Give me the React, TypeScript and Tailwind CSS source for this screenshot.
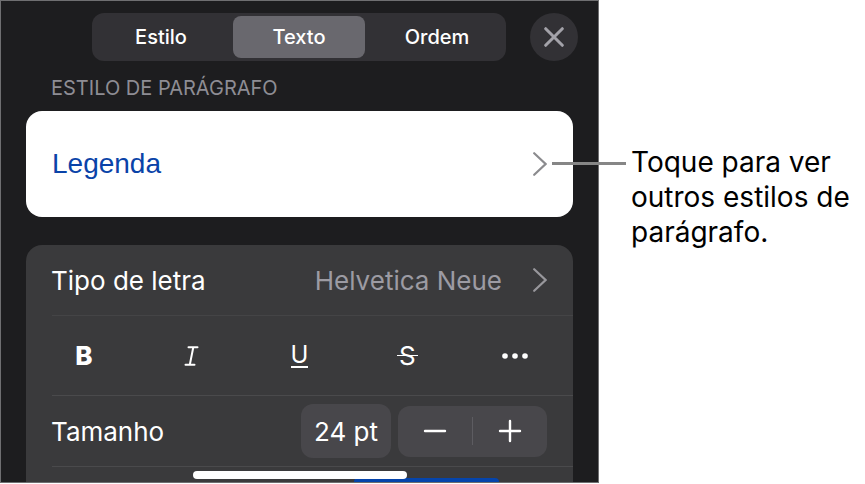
import { clsx } from 'clsx';
import type { ReactNode } from 'react';

const tabs = ['Estilo', 'Texto', 'Ordem'];

const Chevron = ({ className }: { className?: string }) => (
  <svg viewBox="0 0 14 24" className={clsx('h-6 w-3.5', className)} fill="none" stroke="currentColor" strokeWidth="2.2" strokeLinecap="round" aria-hidden="true">
    <path d="M1.2 1.2 12.6 12 1.2 22.8" />
  </svg>
);

interface FormatButtonProps {
  label: string;
  children: ReactNode;
}

const FormatButton = ({ label, children }: FormatButtonProps) => (
  <button type="button" aria-label={label} className="flex h-full flex-1 items-center justify-center">
    {children}
  </button>
);

const Header = () => (
  <header className="flex items-center gap-6 pt-3 pr-5 pl-[91px]">
    <div role="tablist" className="grid h-12 flex-1 grid-cols-3 rounded-xl bg-[#323135] py-[3px]">
      {tabs.map((tab) => (
        <button
          key={tab}
          type="button"
          role="tab"
          aria-selected={tab === 'Texto'}
          className={clsx('mx-[3px] rounded-lg text-xl font-medium', tab === 'Texto' && 'bg-[#69686e]')}
        >
          {tab}
        </button>
      ))}
    </div>
    <button type="button" aria-label="Fechar" className="flex size-12 items-center justify-center rounded-full bg-[#323135] text-[#a3a2a9]">
      <svg viewBox="0 0 20 20" className="size-5" fill="none" stroke="currentColor" strokeWidth="3" strokeLinecap="round" aria-hidden="true">
        <path d="M1.7 1.7 18.3 18.3M18.3 1.7 1.7 18.3" />
      </svg>
    </button>
  </header>
);

const FormatRow = () => (
  <div className="flex h-[79px] px-1">
    <FormatButton label="Negrito">
      <span className="text-[26px] font-extrabold">B</span>
    </FormatButton>
    <FormatButton label="Itálico">
      <svg viewBox="0 0 16 20" className="h-5 w-4" fill="none" stroke="currentColor" strokeWidth="2" strokeLinecap="round" aria-hidden="true">
        <path d="M4.5 1.2h9M1.5 18.8h9M9.3 1.2 5.8 18.8" />
      </svg>
    </FormatButton>
    <FormatButton label="Sublinhado">
      <span className="border-b-2 border-white text-2xl leading-[22px]">U</span>
    </FormatButton>
    <FormatButton label="Rasurado">
      <span className="relative text-[26px] leading-7">
        S
        <span className="absolute inset-x-[-2px] top-[13px] h-px bg-white" />
      </span>
    </FormatButton>
    <FormatButton label="Mais opções">
      <svg viewBox="0 0 26 6" className="h-1.5 w-[26px]" fill="currentColor" aria-hidden="true">
        <circle cx="3" cy="3" r="2.8" />
        <circle cx="13" cy="3" r="2.8" />
        <circle cx="23" cy="3" r="2.8" />
      </svg>
    </FormatButton>
  </div>
);

const SizeRow = () => (
  <div className="flex h-[70px] items-center pr-[26px] pl-[25px]">
    <span className="flex-1 text-[26px]">Tamanho</span>
    <button type="button" className="h-[54px] w-[90px] rounded-xl bg-[#48474b] text-[26px]">
      24 pt
    </button>
    <div className="ml-[7px] flex h-[51px] w-[149px] items-center rounded-xl bg-[#48474b]">
      <button type="button" aria-label="Diminuir" className="flex h-full flex-1 items-center justify-center">
        <svg viewBox="0 0 24 24" className="size-6" stroke="currentColor" strokeWidth="2.4" strokeLinecap="round" aria-hidden="true">
          <path d="M2 12h20" />
        </svg>
      </button>
      <div className="h-7 w-px bg-[#5d5c61]" />
      <button type="button" aria-label="Aumentar" className="flex h-full flex-1 items-center justify-center">
        <svg viewBox="0 0 24 24" className="size-6" stroke="currentColor" strokeWidth="2.4" strokeLinecap="round" aria-hidden="true">
          <path d="M2 12h20M12 2v20" />
        </svg>
      </button>
    </div>
  </div>
);

export default function App() {
  return (
    <main className="flex items-start bg-white font-['Inter',sans-serif]">
      <section className="relative min-w-0 flex-1 border border-[#6f6f71] bg-[#1d1d1f] text-white">
        <Header />
        <h2 className="px-[50px] pt-[13px] pb-[9px] text-xl leading-7 text-[#8e8d94]">ESTILO DE PARÁGRAFO</h2>

        <div className="px-[25px]">
          <button type="button" className="flex h-[106px] w-full items-center justify-between rounded-2xl bg-white px-[26px] text-[#0a43a8]">
            <span className="font-['Liberation_Sans',sans-serif] text-[28px]">Legenda</span>
            <Chevron className="text-[#8b8b8e]" />
          </button>

          <div className="mt-7 rounded-t-2xl bg-[#3a3a3c]">
            <button type="button" className="flex h-[70px] w-full items-center pr-[26px] pl-[25px] text-[26px]">
              <span className="flex-1 text-left">Tipo de letra</span>
              <span className="text-[#9c9ba3]">Helvetica Neue</span>
              <Chevron className="ml-[31px] text-[#98979c]" />
            </button>
            <div className="ml-[26px] h-px bg-[#444446]" />
            <FormatRow />
            <div className="ml-[26px] h-px bg-[#4a4a4c]" />
            <SizeRow />
            <div className="ml-[26px] h-px bg-[#4a4a4c]" />
            <div className="flex h-[15px] justify-end pt-[11px] pr-[74px]">
              <div className="w-[145px] rounded-t-xl bg-[#0544ab]" />
            </div>
          </div>
        </div>

        <div className="absolute bottom-[3px] left-1/2 h-2 w-[214px] -translate-x-1/2 rounded-full bg-white" />
      </section>

      <aside className="w-[266px] pt-[145px] pl-[32px]">
        <p className="relative text-[28px] leading-[35px] whitespace-nowrap text-black">
          <span className="absolute top-[17px] right-full mr-[5px] h-[3px] w-[74px] bg-[#868686]" />
          Toque para ver
          <br />
          outros estilos de
          <br />
          parágrafo.
        </p>
      </aside>
    </main>
  );
}
